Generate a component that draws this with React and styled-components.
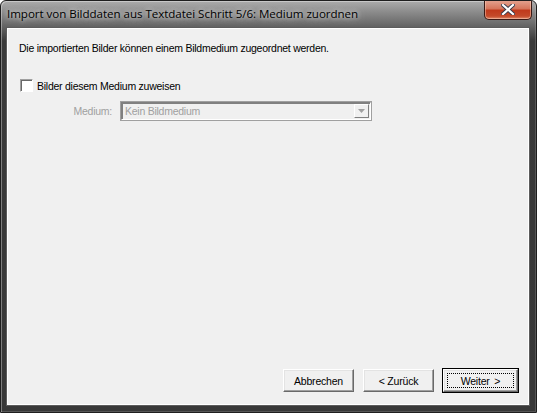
import React from 'react';
import styled, { createGlobalStyle } from 'styled-components';

const GlobalStyle = createGlobalStyle`
    html, body {
        margin: 0;
        padding: 0;
        background: #ffffff;
    }
`;

const Window = styled.div`
    width: 537px;
    height: 413px;
    box-sizing: border-box;
    display: flex;
    flex-direction: column;
    border-radius: 6px 6px 0 0;
    border: 1px solid #1e1e1e;
    background: linear-gradient(to bottom, #acacac 0px, #8e8e8e 10px, #626262 26px, #3a3a3a 40px, #383838 100%);
    box-shadow: inset 1px 1px 0 rgba(255, 255, 255, 0.35), inset -1px -1px 0 rgba(255, 255, 255, 0.15);
    overflow: hidden;
`;

const TitleBar = styled.div`
    height: 27px;
    display: flex;
    align-items: flex-start;
    justify-content: space-between;
    padding: 0 4px 0 6px;
`;

const Title = styled.span`
    margin-top: 5px;
    font-family: 'Open Sans', 'Liberation Sans', sans-serif;
    font-size: 11.6px;
    color: #000;
    letter-spacing: -0.05px;
    text-shadow: 0 0 8px rgba(235, 235, 235, 0.9), 0 0 4px rgba(235, 235, 235, 0.8);
`;

const CloseButton = styled.div`
    width: 48px;
    height: 20px;
    margin-top: -1px;
    box-sizing: border-box;
    border: 1px solid #3a1a16;
    border-top: none;
    border-radius: 0 0 5px 5px;
    background: linear-gradient(to bottom, #e5a593 0%, #d6765c 45%, #c03a1c 55%, #c44a2a 85%, #e08a6a 100%);
    box-shadow: inset 0 0 0 1px rgba(255, 220, 200, 0.45);
    display: flex;
    align-items: center;
    justify-content: center;
`;

const Client = styled.div`
    flex: 1;
    margin: 0 7px 7px 6px;
    box-sizing: border-box;
    background: #f0f0f0;
    border: 1px solid #ffffff;
    outline: 1px solid #5c5c5c;
    display: flex;
    flex-direction: column;
    font-family: 'Liberation Sans', Arial, sans-serif;
    font-size: 10.5px;
    letter-spacing: -0.25px;
    color: #000;
`;

const Content = styled.div`
    flex: 1;
    padding: 13px 0 0 11px;
    display: flex;
    flex-direction: column;
`;

const Intro = styled.p`
    margin: 0;
    line-height: 13px;
`;

const CheckRow = styled.label`
    margin-top: 24px;
    display: flex;
    align-items: center;
    gap: 4px;
    margin-left: 1px;
`;

const CheckBox = styled.span`
    width: 13px;
    height: 13px;
    box-sizing: border-box;
    background: #ffffff;
    border-top: 1px solid #a0a0a0;
    border-left: 1px solid #a0a0a0;
    border-right: 1px solid #ffffff;
    border-bottom: 1px solid #ffffff;
    box-shadow: inset 1px 1px 0 #696969;
`;

const FieldRow = styled.div`
    margin-top: 10px;
    display: flex;
    align-items: center;
    padding-left: 53px;
    gap: 9px;
`;

const FieldLabel = styled.span`
    width: 40px;
    text-align: right;
    color: #a0a0a0;
`;

const Combo = styled.div`
    width: 250px;
    height: 18px;
    box-sizing: border-box;
    border: 1px solid #ffffff;
    border-top-color: #808080;
    border-left-color: #808080;
    outline: 1px solid #a0a0a0;
    display: flex;
    align-items: center;
    justify-content: space-between;
    color: #a0a0a0;
    padding-left: 3px;
    background: #f0f0f0;
    box-shadow: inset 1px 1px 0 #808080;
`;

const ComboArrow = styled.span`
    width: 15px;
    height: 14px;
    margin-right: 1px;
    box-sizing: border-box;
    border-top: 1px solid #ffffff;
    border-left: 1px solid #ffffff;
    border-right: 1px solid #808080;
    border-bottom: 1px solid #808080;
    display: flex;
    align-items: center;
    justify-content: center;
`;

const Footer = styled.div`
    display: flex;
    justify-content: flex-end;
    gap: 9px;
    padding: 0 10px 12px 0;
`;

const Button = styled.button`
    width: ${props => (props.primary ? '75px' : '71px')};
    height: 23px;
    box-sizing: border-box;
    padding: ${props => (props.primary ? '3px' : '0')};
    font-family: 'Liberation Sans', Arial, sans-serif;
    font-size: 10.5px;
    letter-spacing: -0.2px;
    color: #000;
    background: #f0f0f0;
    border-top: 1px solid #ffffff;
    border-left: 1px solid #ffffff;
    border-right: 1px solid #696969;
    border-bottom: 1px solid #696969;
    box-shadow: inset -1px -1px 0 #a0a0a0, inset 1px 1px 0 #e3e3e3;
    outline: ${props => (props.primary ? '1px solid #000' : 'none')};
    display: flex;
    align-items: center;
    justify-content: center;
`;

const FocusRect = styled.span`
    flex: 1;
    align-self: stretch;
    border: 1px dotted #000;
    display: flex;
    align-items: center;
    justify-content: center;
    word-spacing: 2px;
`;

export default function App() {
    return (
        <>
            <GlobalStyle />
            <Window>
                <TitleBar>
                    <Title>Import von Bilddaten aus Textdatei Schritt 5/6: Medium zuordnen</Title>
                    <CloseButton>
                        <svg width="14" height="11" viewBox="0 0 14 11">
                            <path d="M2 1 L12 10 M12 1 L2 10" stroke="#3a3a4a" strokeWidth="4" strokeLinecap="square" />
                            <path d="M2 1 L12 10 M12 1 L2 10" stroke="#ffffff" strokeWidth="2.2" strokeLinecap="square" />
                        </svg>
                    </CloseButton>
                </TitleBar>
                <Client>
                    <Content>
                        <Intro>Die importierten Bilder können einem Bildmedium zugeordnet werden.</Intro>
                        <CheckRow>
                            <CheckBox />
                            <span>Bilder diesem Medium zuweisen</span>
                        </CheckRow>
                        <FieldRow>
                            <FieldLabel>Medium:</FieldLabel>
                            <Combo>
                                <span>Kein Bildmedium</span>
                                <ComboArrow>
                                    <svg width="7" height="4" viewBox="0 0 7 4">
                                        <path d="M0 0 H7 L3.5 4 Z" fill="#a0a0a0" />
                                    </svg>
                                </ComboArrow>
                            </Combo>
                        </FieldRow>
                    </Content>
                    <Footer>
                        <Button>Abbrechen</Button>
                        <Button>&lt; Zurück</Button>
                        <Button primary>
                            <FocusRect>Weiter &gt;</FocusRect>
                        </Button>
                    </Footer>
                </Client>
            </Window>
        </>
    );
}
